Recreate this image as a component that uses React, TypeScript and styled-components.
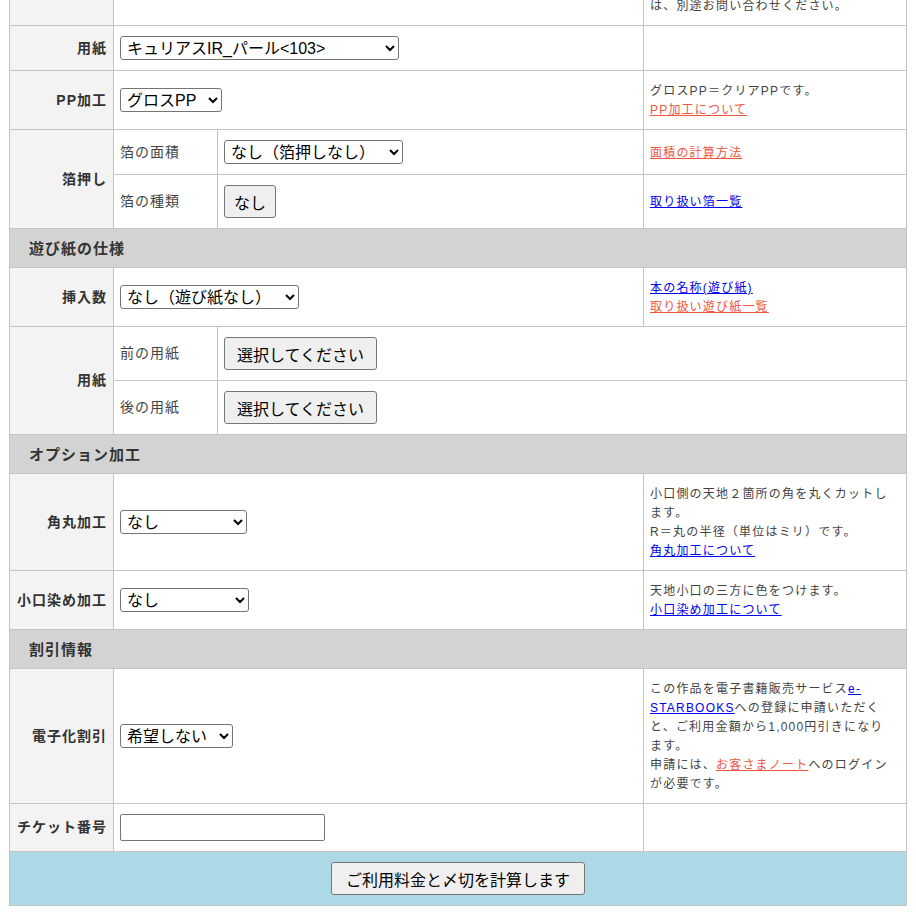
import React from 'react';
import styled, { createGlobalStyle } from 'styled-components';

const GlobalStyle = createGlobalStyle`
  body {
    margin: 0;
    background: #fff;
    color: #333;
    font-family: "Liberation Sans", "Noto Sans CJK JP", sans-serif;
  }
`;

// the page is shown scrolled: only the bottom of the first row is visible
const Page = styled.div`
  padding: 0 9px 12px;
  overflow: hidden;
`;

const FormTable = styled.table`
  width: 898px;
  margin-top: -15px;
  border-collapse: collapse;
  table-layout: fixed;
`;

const Col = styled.col<{ $w: number }>`
  width: ${({ $w }) => $w}px;
`;

const Label = styled.th`
  border: 1px solid #c4c4c4;
  background: #f3f3f3;
  padding: 10px 6px;
  text-align: right;
  vertical-align: middle;
  font-size: 14px;
  line-height: 19px;
  letter-spacing: 1px;
  font-weight: bold;
  color: #333;
  white-space: nowrap;
`;

const SubLabel = styled.td`
  border: 1px solid #c4c4c4;
  padding: 10px 6px;
  vertical-align: middle;
  font-size: 14px;
  line-height: 19px;
  letter-spacing: 1px;
  color: #444;
`;

const Cell = styled.td`
  border: 1px solid #c4c4c4;
  padding: 10px 6px;
  vertical-align: middle;
  line-height: 0;
`;

const Note = styled.td`
  border: 1px solid #c4c4c4;
  padding: 11px 6px 9px;
  vertical-align: middle;
  font-size: 12px;
  line-height: 19px;
  letter-spacing: 0.1em;
  color: #444;
  white-space: nowrap;
`;

const SectionHeader = styled.th`
  border: 1px solid #c4c4c4;
  background: #d3d3d3;
  padding: 11px 19px 9px;
  text-align: left;
  font-size: 15px;
  line-height: 18px;
  letter-spacing: 1px;
  font-weight: bold;
  color: #333;
`;

const ActionCell = styled.td`
  border: 1px solid #c4c4c4;
  background: #add8e6;
  padding: 10px 6px;
  text-align: center;
  line-height: 0;
`;

const Select = styled.select<{ $w: number }>`
  width: ${({ $w }) => $w}px;
  height: 24px;
  padding: 0 2px;
  border: 1px solid #767676;
  border-radius: 3px;
  background: #fff;
  color: #000;
  font-family: "Liberation Sans", "Noto Sans CJK JP", sans-serif;
  font-size: 16px;
  vertical-align: middle;
`;

const Button = styled.button<{ $px?: number }>`
  height: 33px;
  padding: 0 ${({ $px = 10 }) => $px}px;
  border: 1px solid #767676;
  border-radius: 3px;
  background: #efefef;
  color: #000;
  font-family: "Liberation Sans", "Noto Sans CJK JP", sans-serif;
  font-size: 16px;
  vertical-align: middle;
`;

const TextInput = styled.input`
  width: 205px;
  height: 27px;
  box-sizing: border-box;
  border: 1px solid #767676;
  border-radius: 2px;
  vertical-align: middle;
`;

const Link = styled.a<{ $red?: boolean }>`
  color: ${({ $red }) => ($red ? '#ee5640' : '#0000ee')};
  text-decoration: underline;
`;

const Section: React.FC<{ title: string }> = ({ title }) => (
  <tr>
    <SectionHeader colSpan={4}>{title}</SectionHeader>
  </tr>
);

const App: React.FC = () => {
  return (
    <>
      <GlobalStyle />
      <Page>
        <FormTable>
          <colgroup>
            <Col $w={104} />
            <Col $w={104} />
            <Col $w={426} />
            <Col $w={263} />
          </colgroup>
          <tbody>
            <tr>
              <Label />
              <Cell colSpan={2} />
              <Note>は、別途お問い合わせください。</Note>
            </tr>
            <tr>
              <Label>用紙</Label>
              <Cell colSpan={2}>
                <Select $w={279} defaultValue="103">
                  <option value="103">キュリアスIR_パール&lt;103&gt;</option>
                </Select>
              </Cell>
              <Note />
            </tr>
            <tr>
              <Label>PP加工</Label>
              <Cell colSpan={2}>
                <Select $w={102}>
                  <option>グロスPP</option>
                </Select>
              </Cell>
              <Note>
                グロスPP＝クリアPPです。
                <br />
                <Link $red href="#">PP加工について</Link>
              </Note>
            </tr>
            <tr>
              <Label rowSpan={2}>箔押し</Label>
              <SubLabel>箔の面積</SubLabel>
              <Cell>
                <Select $w={179}>
                  <option>なし（箔押しなし）</option>
                </Select>
              </Cell>
              <Note>
                <Link $red href="#">面積の計算方法</Link>
              </Note>
            </tr>
            <tr>
              <SubLabel>箔の種類</SubLabel>
              <Cell>
                <Button type="button" $px={9}>なし</Button>
              </Cell>
              <Note>
                <Link href="#">取り扱い箔一覧</Link>
              </Note>
            </tr>

            <Section title="遊び紙の仕様" />
            <tr>
              <Label>挿入数</Label>
              <Cell colSpan={2}>
                <Select $w={179}>
                  <option>なし（遊び紙なし）</option>
                </Select>
              </Cell>
              <Note>
                <Link href="#">本の名称(遊び紙)</Link>
                <br />
                <Link $red href="#">取り扱い遊び紙一覧</Link>
              </Note>
            </tr>
            <tr>
              <Label rowSpan={2}>用紙</Label>
              <SubLabel>前の用紙</SubLabel>
              <Cell colSpan={2}>
                <Button type="button" $px={12}>選択してください</Button>
              </Cell>
            </tr>
            <tr>
              <SubLabel>後の用紙</SubLabel>
              <Cell colSpan={2}>
                <Button type="button" $px={12}>選択してください</Button>
              </Cell>
            </tr>

            <Section title="オプション加工" />
            <tr>
              <Label>角丸加工</Label>
              <Cell colSpan={2}>
                <Select $w={127}>
                  <option>なし</option>
                </Select>
              </Cell>
              <Note>
                小口側の天地２箇所の角を丸くカットし
                <br />
                ます。
                <br />
                R＝丸の半径（単位はミリ）です。
                <br />
                <Link href="#">角丸加工について</Link>
              </Note>
            </tr>
            <tr>
              <Label>小口染め加工</Label>
              <Cell colSpan={2}>
                <Select $w={129}>
                  <option>なし</option>
                </Select>
              </Cell>
              <Note>
                天地小口の三方に色をつけます。
                <br />
                <Link href="#">小口染め加工について</Link>
              </Note>
            </tr>

            <Section title="割引情報" />
            <tr>
              <Label>電子化割引</Label>
              <Cell colSpan={2}>
                <Select $w={113}>
                  <option>希望しない</option>
                </Select>
              </Cell>
              <Note>
                この作品を電子書籍販売サービス<Link href="#">e-</Link>
                <br />
                <Link href="#">STARBOOKS</Link>への登録に申請いただく
                <br />
                と、ご利用金額から1,000円引きになり
                <br />
                ます。
                <br />
                申請には、<Link $red href="#">お客さまノート</Link>へのログイン
                <br />
                が必要です。
              </Note>
            </tr>
            <tr>
              <Label>チケット番号</Label>
              <Cell colSpan={2}>
                <TextInput type="text" />
              </Cell>
              <Note />
            </tr>
            <tr>
              <ActionCell colSpan={4}>
                <Button type="button" $px={14}>ご利用料金と〆切を計算します</Button>
              </ActionCell>
            </tr>
          </tbody>
        </FormTable>
      </Page>
    </>
  );
};

export default App;
